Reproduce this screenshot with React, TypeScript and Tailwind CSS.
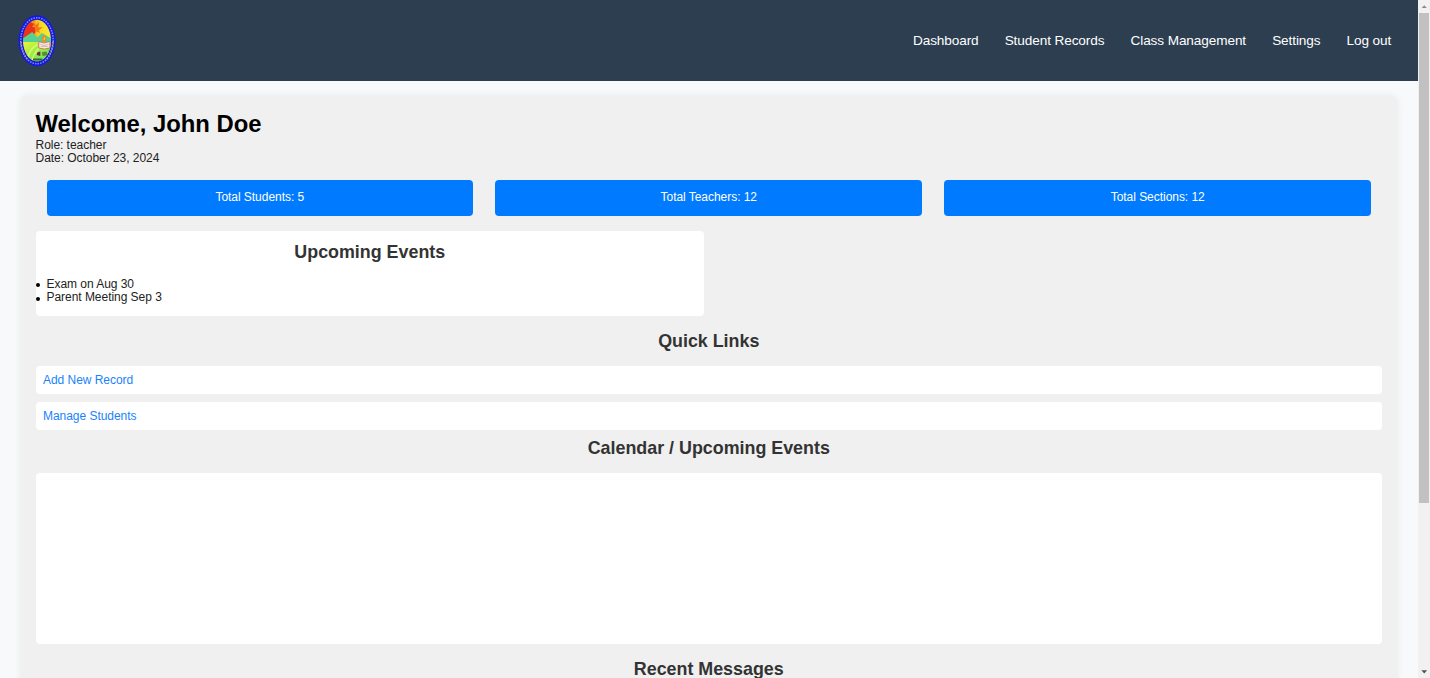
import type { ReactNode } from "react";

const navItems = ["Dashboard", "Student Records", "Class Management", "Settings", "Log out"];
const stats = ["Total Students: 5", "Total Teachers: 12", "Total Sections: 12"];
const events = ["Exam on Aug 30", "Parent Meeting Sep 3"];
const links = ["Add New Record", "Manage Students"];

function SchoolSeal() {
  return (
    <svg className="ml-[18px] h-[52px] w-[38px] shrink-0" viewBox="0 0 75 104" preserveAspectRatio="none" aria-hidden="true">
      <defs>
        <clipPath id="seal">
          <ellipse cx="37.5" cy="51" rx="27.5" ry="41.5" />
        </clipPath>
        <linearGradient id="sky" x1="0" x2="1" y1="0" y2="0">
          <stop offset="0" stopColor="#ee3b20" />
          <stop offset=".35" stopColor="#f59a1c" />
          <stop offset=".6" stopColor="#f8d824" />
          <stop offset="1" stopColor="#f8f02c" />
        </linearGradient>
        <linearGradient id="field" x1="0" x2="1" y1="0" y2="1">
          <stop offset="0" stopColor="#f6f03a" />
          <stop offset=".4" stopColor="#9fef45" />
          <stop offset="1" stopColor="#48e070" />
        </linearGradient>
      </defs>
      <ellipse cx="37.5" cy="51.5" rx="36.5" ry="51" fill="#1418e6" />
      <ellipse cx="37.5" cy="51.5" rx="32" ry="46" fill="none" stroke="#7f8df0" strokeWidth="3" strokeDasharray="3 2.2" />
      <path d="M6 54Q8 77 20 90M69 54Q67 77 55 90" fill="none" stroke="#b9ac6a" strokeWidth="3" strokeDasharray="2.5 3" />
      <g clipPath="url(#seal)">
        <rect x="8" y="8" width="60" height="88" fill="url(#sky)" />
        <path d="M8 30L24 14L32 18L28 24L36 24L34 36L24 46L8 54Z" fill="#ed3018" />
        <path d="M29 10L35 20L42 14L40 25L49 24L41 31L44 36L34 32Z" fill="#f07a18" />
        <path d="M8 48L28 34L38 45L47 36L68 48V58H8Z" fill="#54d092" />
        <rect x="8" y="54" width="60" height="44" fill="url(#field)" />
        <path d="M18 96Q20 69 38 59M27 97Q29 78 42 66" fill="none" stroke="#d8f86b" strokeWidth="3" />
        <path d="M58 70Q66 80 50 95L66 97V67Z" fill="#49df66" />
      </g>
      <path d="M41 53L51 56L63 53V66L52 68L41 66Z" fill="#f5eadf" stroke="#d8604c" strokeWidth="1.6" />
      <path d="M44 59L51 61L60 59M45 63H59" fill="none" stroke="#c9a19a" strokeWidth="1.3" />
      <path d="M48 53Q44 47 52 39Q59 48 55 53Z" fill="#f08a22" />
      <path d="M51 50L53 45" stroke="#f8de3c" strokeWidth="2" />
      <path d="M38 75L44 73V82L37 80Z" fill="#6c294d" />
      <path d="M48 75L56 74L58 80L49 81Z" fill="#6c8f20" stroke="#416920" />
      <path d="M30 89H48" stroke="#263d22" strokeWidth="4" strokeDasharray="3 1" />
    </svg>
  );
}

function Heading({ children }: { children: ReactNode }) {
  return <h2 className="text-center text-[17.88px] leading-[21px] font-bold text-[#333333]">{children}</h2>;
}

function Scrollbar() {
  return (
    <div className="flex h-full w-[12.5px] shrink-0 flex-col items-center bg-[#f1f1f1]" aria-hidden="true">
      <svg className="h-[12.5px] w-[12.5px] shrink-0" viewBox="0 0 12.5 12.5">
        <path d="M3.7 8L6.25 5.2L8.8 8Z" fill="#8b8b8b" />
      </svg>
      <div className="h-[490px] w-[9.7px] shrink-0 bg-[#c1c1c1]" />
      <div className="flex-1" />
      <svg className="h-[12.5px] w-[12.5px] shrink-0" viewBox="0 0 12.5 12.5">
        <path d="M3.4 4.2L6.25 7.6L9.1 4.2Z" fill="#505050" />
      </svg>
    </div>
  );
}

export default function App() {
  return (
    <div className="flex h-[678px] w-full overflow-hidden bg-[#f8f9fb] font-['Liberation_Sans',Arial,sans-serif] text-[12px] leading-[13.4px] tracking-[-0.04px] text-[#222222]">
      <div className="flex h-full min-w-0 flex-1 flex-col overflow-hidden">
        <header className="flex h-[81px] shrink-0 items-center justify-between bg-[#2c3e50]">
          <SchoolSeal />
          <nav className="mr-[26.3px] flex gap-[26.1px] text-[13.6px] leading-4 tracking-[-0.1px] text-white">
            {navItems.map((item) => (
              <a key={item} href="#">{item}</a>
            ))}
          </nav>
        </header>

        <main className="mx-[20.5px] mt-[15px] h-[900px] shrink-0 rounded-[6px] bg-[#f0f0f0] px-[15px] pt-[14px] shadow-[0_0_7.5px_rgba(0,0,0,0.08)]">
          <h1 className="text-[23.83px] leading-[28px] font-bold tracking-normal text-black">Welcome, John Doe</h1>
          <div className="pt-[0.7px]">
            <p>Role: teacher</p>
            <p>Date: October 23, 2024</p>
          </div>

          <div className="mt-[14.5px] flex justify-around gap-[22.4px] px-[11px]">
            {stats.map((stat) => (
              <div key={stat} className="h-[36px] flex-1 rounded-[4px] bg-[#007bff] text-center leading-[35.6px] text-white">
                {stat}
              </div>
            ))}
          </div>

          <section className="mt-[15px] h-[85px] w-[668.5px] rounded-[4px] bg-white pt-[11px] tracking-normal">
            <Heading>Upcoming Events</Heading>
            <ul className="mt-[15px] tracking-[-0.04px]">
              {events.map((event) => (
                <li key={event} className="flex items-center">
                  <span className="mt-px mr-[7px] size-[4px] shrink-0 rounded-full bg-black" />
                  {event}
                </li>
              ))}
            </ul>
          </section>

          <section className="pt-[15px] tracking-normal">
            <Heading>Quick Links</Heading>
            <ul className="mt-[14px] flex flex-col gap-[7.5px] tracking-[-0.04px]">
              {links.map((link) => (
                <li key={link} className="h-[28.3px] rounded-[4px] bg-white px-[7.5px] leading-[28px]">
                  <a href="#" className="text-[#1a83fa]">{link}</a>
                </li>
              ))}
            </ul>
          </section>

          <section className="pt-[8px] tracking-normal">
            <Heading>Calendar / Upcoming Events</Heading>
            <div className="mt-[14px] h-[171px] rounded-[4px] bg-white" />
          </section>

          <section className="pt-[15px] tracking-normal">
            <Heading>Recent Messages</Heading>
          </section>
        </main>
      </div>
      <Scrollbar />
    </div>
  );
}
